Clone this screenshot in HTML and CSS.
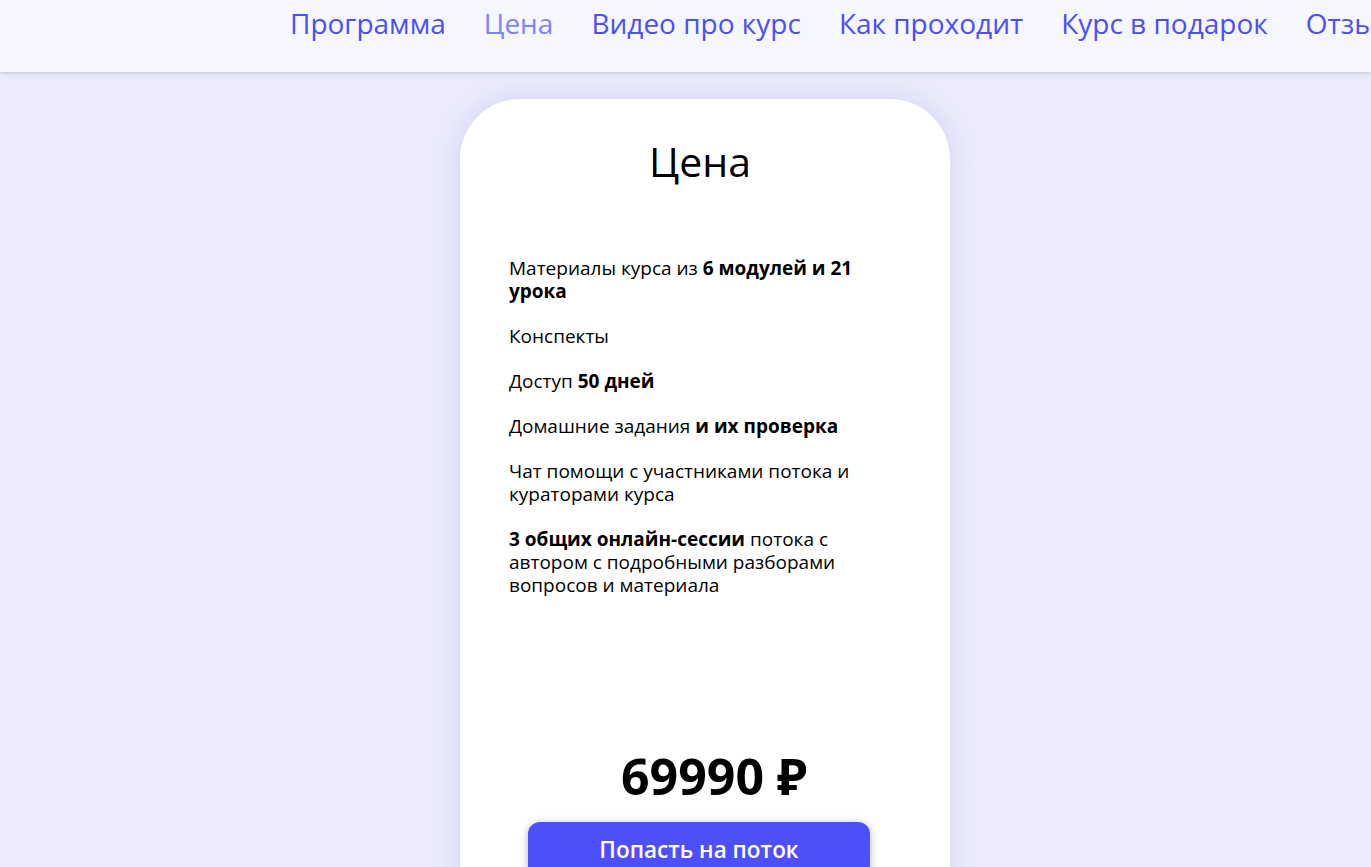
FILE: index.html
```html
<!DOCTYPE html>
<html lang="ru">
<head>
    <meta charset="UTF-8">
    <meta name="viewport" content="width=device-width, initial-scale=1.0">
    <title>Цена</title>
    <link rel="stylesheet" href="styles.css">
</head>
<body>
    <!-- Верхнее меню -->
    <header class="top-bar">
        <nav class="menu">
            <a href="#program">Программа</a>
            <a href="#price" class="active">Цена</a>
            <a href="#video">Видео про курс</a>
            <a href="#how">Как проходит</a>
            <a href="#gift">Курс в подарок</a>
            <a href="#reviews">Отзывы</a>
        </nav>
    </header>

    <!-- Карточка цены -->
    <section class="prices" id="price">
        <div class="price-card">
            <h2>Цена</h2>
            <div class="features">
                <p>Материалы курса из <b>6 модулей и 21 урока</b></p>
                <p>Конспекты</p>
                <p>Доступ <b>50 дней</b></p>
                <p>Домашние задания <b>и их проверка</b></p>
                <p>Чат помощи с участниками потока и кураторами курса</p>
                <p><b>3 общих онлайн-сессии</b> потока с автором с подробными разборами вопросов и материала</p>
            </div>
            <div class="price">69990 ₽</div>
            <button class="buy-btn">Попасть на поток</button>
        </div>
    </section>
</body>
</html>
```

FILE: styles.css
```css
body {
    margin: 0;
    background-color: #ebebfc;
    font-family: "Open Sans", "Noto Sans", sans-serif;
    color: #000;
    overflow: hidden;
}

.top-bar {
    height: 72px;
    background-color: #f6f7fe;
    box-shadow: 0 1px 4px rgba(60, 60, 120, 0.25);
    position: relative;
    z-index: 2;
}

.menu {
    display: flex;
    gap: 38px;
    padding-left: 290px;
    padding-top: 4px;
    white-space: nowrap;
}

.menu a {
    font-size: 28px;
    color: #4b4ff5;
    text-decoration: none;
}

.menu a.active {
    color: #7f82f6;
}

.prices {
    padding-top: 27px;
    padding-left: 460px;
}

.price-card {
    width: 490px;
    height: 900px;
    box-sizing: border-box;
    background: white;
    border-radius: 60px;
    padding: 34px 49px 0;
    box-shadow: 0 0 24px rgba(90, 90, 200, 0.18);
}

.price-card h2 {
    margin: 0 10px 0 0;
    text-align: center;
    font-size: 41px;
    font-weight: 400;
    line-height: 1.4;
}

.features {
    margin-top: 67px;
    width: 365px;
    height: 489px;
}

.features p {
    margin: 0 0 22px;
    font-size: 19px;
    line-height: 23px;
}

.price {
    text-align: center;
    font-size: 50px;
    font-weight: 700;
    padding-left: 18px;
    line-height: 1.2;
}

.buy-btn {
    display: block;
    margin: 16px 0 0 19px;
    width: 342px;
    height: 56px;
    border: none;
    border-radius: 12px;
    background: #4d4ffa;
    color: white;
    font-family: inherit;
    font-size: 22.5px;
    font-weight: 600;
    padding-bottom: 2px;
    box-shadow: 0 2px 8px rgba(0, 0, 0, 0.3);
    cursor: pointer;
}
```
